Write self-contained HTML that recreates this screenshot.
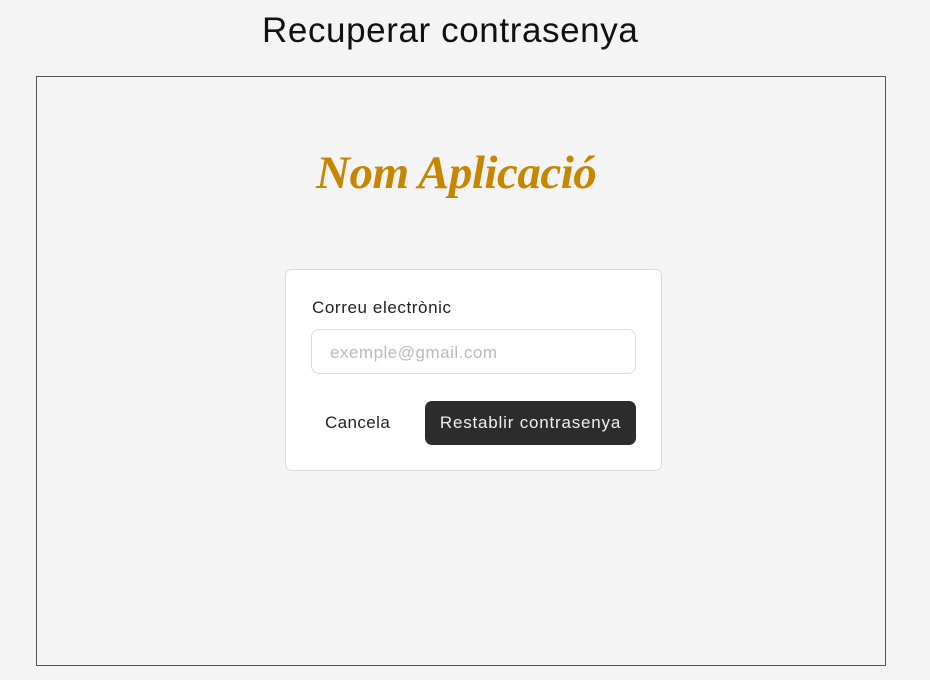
<!DOCTYPE html>
<html><head><style>
body{margin:0;width:930px;height:680px;background:#f4f4f4;font-family:"Liberation Sans",sans-serif;position:relative;overflow:hidden}
.h{position:absolute;left:262px;top:11px;font-size:35px;color:#111;letter-spacing:0.6px}
.f{position:absolute;left:36px;top:76px;width:848px;height:588px;border:1px solid #555}
.t{position:absolute;left:316px;width:290px;top:146px;text-align:left;font-family:"Liberation Serif",serif;font-weight:bold;font-style:italic;font-size:47px;color:#c68600;letter-spacing:-0.5px}
.c{position:absolute;left:285px;top:269px;width:377px;height:202px;background:#fff;border:1px solid #ddd;border-radius:7px;box-sizing:border-box}
.l{position:absolute;left:312px;top:298px;font-size:17px;color:#222;letter-spacing:0.6px}
.i{position:absolute;left:311px;top:329px;width:325px;height:45px;border:1px solid #ddd;border-radius:8px;box-sizing:border-box;font-size:17px;color:#bbb;padding:13px 0 0 18px;letter-spacing:0.5px}
.x{position:absolute;left:325px;top:413px;font-size:17px;color:#222;letter-spacing:0.4px}
.b{position:absolute;left:425px;top:401px;width:211px;height:44px;background:#2c2c2c;border-radius:7px;color:#eee;font-size:17px;text-align:center;line-height:44px;letter-spacing:0.8px}
</style></head><body>
<div class="h">Recuperar contrasenya</div>
<div class="f"></div>
<div class="t">Nom Aplicació</div>
<div class="c"></div>
<div class="l">Correu electrònic</div>
<div class="i">exemple@gmail.com</div>
<div class="x">Cancela</div>
<div class="b">Restablir contrasenya</div>
</body></html>
